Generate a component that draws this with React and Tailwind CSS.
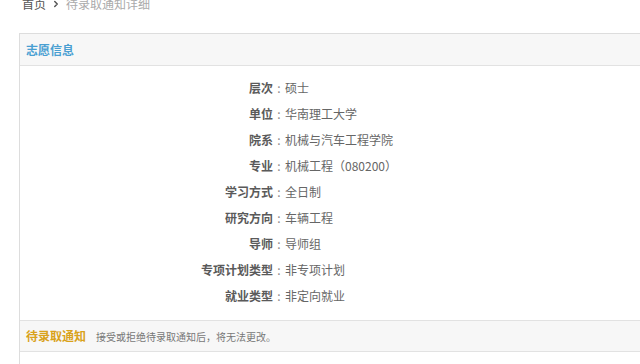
import { ChevronRight } from "lucide-react";

const rows = [
  ["层次", "硕士"],
  ["单位", "华南理工大学"],
  ["院系", "机械与汽车工程学院"],
  ["专业", "机械工程（080200）"],
  ["学习方式", "全日制"],
  ["研究方向", "车辆工程"],
  ["导师", "导师组"],
  ["专项计划类型", "非专项计划"],
  ["就业类型", "非定向就业"],
];

export default function App() {
  return (
    <div className="h-[364px] overflow-hidden bg-white font-['Microsoft_YaHei','Noto_Sans_CJK_SC',sans-serif] text-[12px]">
      {/* breadcrumb */}
      <div className="flex h-[33px] pl-[22px]">
        <div className="-mt-[2px] flex h-[12px] items-center leading-[12px]">
          <span className="text-[#555]">首页</span>
          <ChevronRight className="mx-[5px] h-[10px] w-[10px] text-[#555]" strokeWidth={3.5} />
          <span className="text-[#aaa]">待录取通知详细</span>
        </div>
      </div>

      <div className="ml-[19px] h-[331px] border-l border-t border-[#dddddd]">
        <div className="flex h-[32px] items-center border-b border-[#e2e2e2] bg-[#f7f7f7] pl-[6px]">
          <span className="font-bold text-[#4a9fd2]">志愿信息</span>
        </div>

        <div className="pb-[11px] pt-[9px]">
          {rows.map(([label, value]) => (
            <div key={label} className="flex h-[26px] items-center">
              <span className="w-[253px] text-right font-bold text-[#5a5a5a]">{label}</span>
              <span className="w-[12px] text-center text-[#888]">:</span>
              <span className="text-[#666]">{value}</span>
            </div>
          ))}
        </div>

        <div className="flex h-[32px] items-center border-b border-t border-[#e2e2e2] bg-[#f7f7f7] pl-[6px]">
          <span className="font-bold text-[#d9a21b]">待录取通知</span>
          <span className="ml-[10px] text-[10px] text-[#777]">
            接受或拒绝待录取通知后，将无法更改。
          </span>
        </div>
      </div>
    </div>
  );
}
